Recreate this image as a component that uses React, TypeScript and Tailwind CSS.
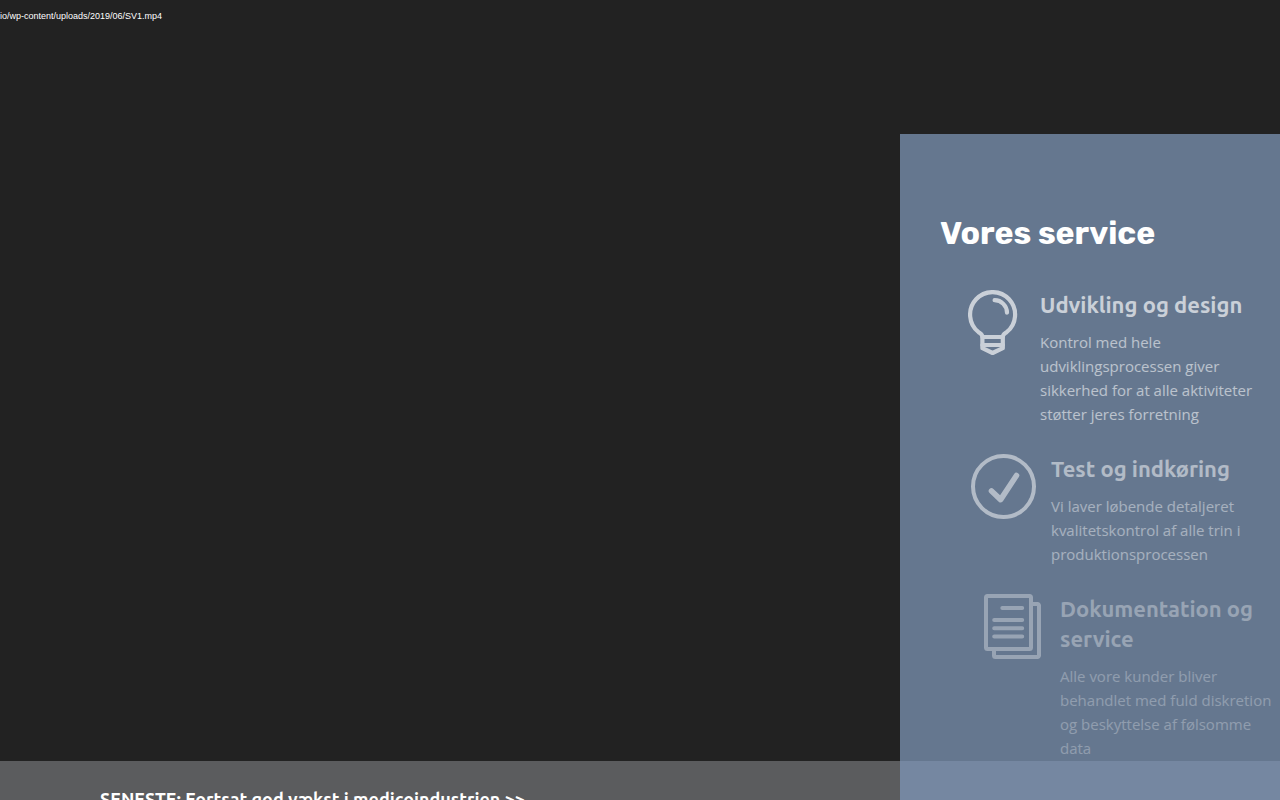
import type { ReactNode } from 'react';

interface Service {
  title: string;
  text: string;
  className: string;
  icon: ReactNode;
}

const BulbIcon = () => (
  <svg
    viewBox="0 0 65 65"
    className="w-[65px] h-[65px] shrink-0"
    fill="none"
    stroke="currentColor"
    strokeWidth="4.2"
    strokeLinecap="round"
    strokeLinejoin="round"
    aria-hidden="true"
  >
    <path d="M22.4 46.8C22.4 44.4 20.6 43.6 18.6 42.2A22.5 22.5 0 1 1 46.6 42.2C44.6 43.6 42.8 44.4 42.8 46.8" />
    <path d="M22.4 47H42.8V58.2L32.6 63L22.4 58.2Z" />
    <path d="M22.4 55H42.8" />
    <path d="M34.6 10.2A12.6 12.6 0 0 1 47 22.6" />
  </svg>
);

const CheckIcon = () => (
  <svg
    viewBox="0 0 65 65"
    className="w-[65px] h-[65px] shrink-0"
    fill="none"
    stroke="currentColor"
    strokeLinecap="round"
    strokeLinejoin="round"
    aria-hidden="true"
  >
    <circle cx="32.5" cy="32.5" r="30.5" strokeWidth="4" />
    <path d="M20.5 37L29.6 45.6L45.5 21.5" strokeWidth="5.6" />
  </svg>
);

const DocumentIcon = () => (
  <svg
    viewBox="0 0 65 65"
    className="w-[65px] h-[65px] shrink-0"
    fill="none"
    stroke="currentColor"
    strokeWidth="4"
    strokeLinecap="round"
    strokeLinejoin="round"
    aria-hidden="true"
  >
    <rect x="6" y="2" width="45" height="53" rx="1.5" />
    <path d="M51 10H57.5A1.5 1.5 0 0 1 59 11.5V61.5A1.5 1.5 0 0 1 57.5 63H15.5A1.5 1.5 0 0 1 14 61.5V55" />
    <path d="M22.3 14H42.2M14.2 26H42.2M14.2 34.2H42.2M14.2 42.4H42.2" />
  </svg>
);

const services: Service[] = [
  {
    title: 'Udvikling og design',
    text: 'Kontrol med hele udviklingsprocessen giver sikkerhed for at alle aktiviteter støtter jeres forretning',
    className: 'pl-5 pr-4 opacity-66',
    icon: <BulbIcon />,
  },
  {
    title: 'Test og indkøring',
    text: 'Vi laver løbende detaljeret kvalitetskontrol af alle trin i produktionsprocessen',
    className: 'pl-[31px] pr-2 opacity-50',
    icon: <CheckIcon />,
  },
  {
    title: 'Dokumentation og service',
    text: 'Alle vore kunder bliver behandlet med fuld diskretion og beskyttelse af følsomme data',
    className: 'pl-10 opacity-33',
    icon: <DocumentIcon />,
  },
];

function ServiceItem({ title, text, className, icon }: Service) {
  return (
    <li className={`flex items-start gap-[15px] ${className}`}>
      {icon}
      <div className="flex-1 min-w-0">
        <h3 className="font-[Ubuntu,'Noto_Sans',sans-serif] text-[22px] leading-[30px] font-bold">
          {title}
        </h3>
        <p className="mt-[10px] text-[15px] leading-6 text-white/85">{text}</p>
      </div>
    </li>
  );
}

export default function App() {
  return (
    <main className="relative flex h-screen flex-col overflow-hidden bg-[#222] font-['Open_Sans',sans-serif] text-white">
      {/* Video address */}
      <div className="h-[134px] shrink-0 pt-[10px]">
        <p className="font-['Liberation_Sans',Arial,sans-serif] text-[9px] leading-3">
          io/wp-content/uploads/2019/06/SV1.mp4
        </p>
      </div>

      {/* Services panel */}
      <section className="flex-1 self-end w-[380px] max-w-full bg-[#65778f] pl-10 pr-2 pt-20">
        <h2 className="font-[Rubik,Inter,sans-serif] text-[32px] leading-[38px] font-bold">
          Vores service
        </h2>
        <ul className="mt-[38px] flex flex-col gap-7">
          {services.map(service => (
            <ServiceItem key={service.title} {...service} />
          ))}
        </ul>
      </section>

      {/* Latest news bar, lies over the bottom of the panel */}
      <aside className="absolute inset-x-0 bottom-0 flex h-[39px] overflow-hidden">
        <div className="flex-1 bg-[#5b5c5e] pl-[100px] pt-[26px]">
          <a
            href="#seneste"
            className="font-[Ubuntu,'Noto_Sans',sans-serif] text-[18px] leading-6 font-bold whitespace-nowrap"
          >
            SENESTE: Fortsat god vækst i medicoindustrien &gt;&gt;
          </a>
        </div>
        <div className="w-[380px] max-w-full bg-[#7587a1]" />
      </aside>
    </main>
  );
}
